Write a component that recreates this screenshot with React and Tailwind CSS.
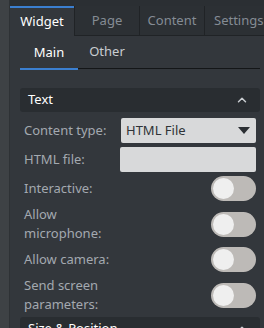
import { ChevronUp } from "lucide-react";

function Toggle() {
  return (
    <div className="w-[45px] h-[25px] shrink-0 rounded-full bg-[#bdbab7] flex items-center px-[2px]">
      <div className="w-[21px] h-[21px] rounded-full bg-[#efefef]" />
    </div>
  );
}

function Row({ label, children, tall }) {
  return (
    <div className={`shrink-0 flex items-center justify-between ${tall ? "h-[38px]" : "h-[25px]"}`}>
      <div className="w-[96px] pl-1 text-[13px] leading-[19px] text-[#a3a9b0]">{label}</div>
      {children}
    </div>
  );
}

export default function App() {
  return (
    <div
      className="w-[264px] h-[328px] overflow-hidden flex bg-[#3d4144]"
      style={{ fontFamily: '"Noto Sans", "Open Sans", sans-serif' }}
    >
      <div className="w-[10px] shrink-0 bg-[#3e4245] border-r border-[#2e3235]" />
      <div className="flex-1 bg-[#33373c]">
        {/* top tabs */}
        <div className="h-[36px] flex bg-[#2b2f33] pt-[6px]">
          <div className="w-[64px] border-t-2 border-[#3b7fd0] bg-[#33373c] flex items-center justify-center text-[13px] text-white">
            Widget
          </div>
          <div className="w-[65px] bg-[#2c3034] border-l border-b border-[#202326] flex items-center justify-center text-[13px] text-[#858c94]">
            Page
          </div>
          <div className="w-[65px] bg-[#2c3034] border-l border-b border-[#202326] flex items-center justify-center text-[13px] text-[#858c94]">
            Content
          </div>
          <div className="flex-1 bg-[#2c3034] border-l border-b border-[#202326] flex items-center pl-[9px] text-[13px] text-[#858c94] whitespace-nowrap">
            Settings
          </div>
        </div>

        <div className="pl-[10px] pr-[4px]">
          {/* sub tabs */}
          <div className="h-[33px] flex items-end border-b-[1.5px] border-[#141618]">
            <div className="w-[58px] h-full flex items-center justify-center text-[13px] text-white border-b-2 border-[#3b7fd0] -mb-[1.5px]">
              Main
            </div>
            <div className="w-[58px] h-full flex items-center justify-center text-[13px] text-[#c9cdd1]">
              Other
            </div>
          </div>

          {/* section header */}
          <div className="mt-[19px] h-[24px] rounded-[3px] bg-[#292d31] flex items-center justify-between pl-[8px] pr-[11px]">
            <span className="text-[13px] text-white">Text</span>
            <ChevronUp size={14} strokeWidth={2.5} className="text-[#c9cdd1]" />
          </div>

          <div className="flex flex-col gap-[4px] mt-[6px] pr-[4px]">
            <Row label="Content type:">
              <div className="w-[135px] h-[25px] bg-[#d8d9da] rounded-[2px] flex items-center justify-between pl-[5px] pr-[6px]">
                <span className="text-[13px] text-[#2f3337]">HTML File</span>
                <svg width="12" height="7" viewBox="0 0 12 7">
                  <path d="M0 0 L12 0 L6 7 Z" fill="#2b2f33" />
                </svg>
              </div>
            </Row>
            <Row label="HTML file:">
              <div className="w-[136px] h-[25px] bg-[#d8d9da] rounded-[2px]" />
            </Row>
            <Row label="Interactive:">
              <Toggle />
            </Row>
            <Row label="Allow microphone:" tall>
              <Toggle />
            </Row>
            <Row label="Allow camera:">
              <Toggle />
            </Row>
            <Row label="Send screen parameters:" tall>
              <Toggle />
            </Row>
          </div>

          <div className="mt-[3px] h-[24px] rounded-[3px] bg-[#292d31] flex items-center justify-between pl-[8px] pr-[11px]">
            <span className="text-[13px] text-white">Size &amp; Position</span>
            <ChevronUp size={14} strokeWidth={2.5} className="text-[#c9cdd1]" />
          </div>
        </div>
      </div>
    </div>
  );
}
